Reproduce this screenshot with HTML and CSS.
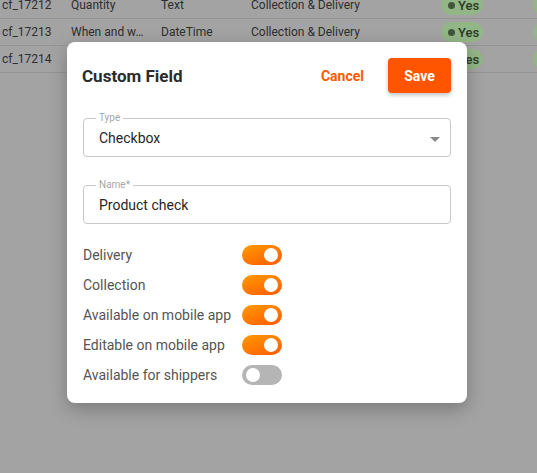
FILE: index.html
```html
<!DOCTYPE html>
<html>
<head>
<meta charset="utf-8">
<link rel="stylesheet" href="styles.css">
</head>
<body>
<div class="page">
  <div class="table">
    <div class="row">
      <span class="c1">cf_17212</span><span class="c2">Quantity</span><span class="c3">Text</span><span class="c4">Collection &amp; Delivery</span>
      <span class="c5"><span class="pill"><i class="dot"></i>Yes</span></span><span class="c6"><span class="pill"><i class="dot"></i>Yes</span></span>
    </div>
    <div class="row">
      <span class="c1">cf_17213</span><span class="c2">When and w…</span><span class="c3">DateTime</span><span class="c4">Collection &amp; Delivery</span>
      <span class="c5"><span class="pill"><i class="dot"></i>Yes</span></span><span class="c6"><span class="pill"><i class="dot"></i>Yes</span></span>
    </div>
    <div class="row">
      <span class="c1">cf_17214</span><span class="c2">Description</span><span class="c3">Text</span><span class="c4">Collection &amp; Delivery</span>
      <span class="c5"><span class="pill"><i class="dot"></i>Yes</span></span><span class="c6"><span class="pill"><i class="dot"></i>Yes</span></span>
    </div>
  </div>

  <div class="modal">
    <div class="header">
      <h2 class="title">Custom Field</h2>
      <div class="actions">
        <button class="btn-text">Cancel</button>
        <button class="btn-primary">Save</button>
      </div>
    </div>

    <fieldset class="field">
      <legend>Type</legend>
      <span class="value">Checkbox</span>
      <svg class="caret" width="10" height="5" viewBox="0 0 10 5"><path d="M0 0 L10 0 L5 5 Z" fill="#8a8a8a"/></svg>
    </fieldset>

    <fieldset class="field field-name">
      <legend>Name*</legend>
      <span class="value">Product check</span>
    </fieldset>

    <div class="toggles">
      <div class="trow"><span class="tlabel">Delivery</span><span class="switch on"><i class="knob"></i></span></div>
      <div class="trow"><span class="tlabel">Collection</span><span class="switch on"><i class="knob"></i></span></div>
      <div class="trow"><span class="tlabel">Available on mobile app</span><span class="switch on"><i class="knob"></i></span></div>
      <div class="trow"><span class="tlabel">Editable on mobile app</span><span class="switch on"><i class="knob"></i></span></div>
      <div class="trow"><span class="tlabel">Available for shippers</span><span class="switch off"><i class="knob"></i></span></div>
    </div>
  </div>
</div>
</body>
</html>
```

FILE: styles.css
```css
* { box-sizing: border-box; }
html, body { margin: 0; padding: 0; }
body {
  font-family: Roboto, "Liberation Sans", sans-serif;
  background: #a3a3a3;
  width: 537px;
  height: 473px;
  overflow: hidden;
}
.page {
  position: relative;
  display: flow-root;
  width: 537px;
  height: 473px;
  overflow: hidden;
  background: #a3a3a3;
}

.table { margin-top: -8px; }
.row {
  display: flex;
  align-items: center;
  height: 27px;
  border-bottom: 1px solid #959595;
  font-size: 12px;
  color: #2e2e2e;
  white-space: nowrap;
  overflow: hidden;
}
.row > span { flex-shrink: 0; overflow: hidden; }
.c1 { width: 71px; padding-left: 2px; }
.c2 { width: 90px; text-overflow: ellipsis; padding-right: 6px; }
.c3 { width: 90px; }
.c4 { width: 190px; }
.c5 { width: 92px; }
.c6 { width: 10px; }
.pill {
  display: inline-flex;
  align-items: center;
  gap: 3px;
  height: 20px;
  width: 42px;
  padding: 0 0 0 7px;
  border-radius: 10px;
  background: #93b686;
  color: #2a3a26;
  font-size: 13px;
  font-weight: 500;
}
.dot { width: 7px; height: 7px; border-radius: 50%; background: #43563c; display: inline-block; }

.modal {
  position: absolute;
  left: 67px;
  top: 42px;
  width: 400px;
  height: 361px;
  background: #fff;
  border-radius: 8px;
  box-shadow: 0 6px 18px rgba(0,0,0,0.25);
  padding: 16px 16px 13px 16px;
}
.header { display: flex; align-items: center; justify-content: space-between; height: 35px; }
.title { margin: 0 0 0 -1px; font-size: 17px; font-weight: 700; color: #2b2b2b; }
.actions { display: flex; align-items: center; gap: 24px; }
.btn-text {
  border: 0; background: none; padding: 0;
  font-family: inherit; font-size: 14px; font-weight: 700; color: #ff5a00;
}
.btn-primary {
  border: 0; background: #ff5500; color: #fff;
  width: 63px; height: 35px; border-radius: 4px;
  font-family: inherit; font-size: 14px; font-weight: 700;
  box-shadow: 0 2px 4px rgba(0,0,0,0.25);
}

.field {
  position: relative;
  margin: 20px 0 0 0;
  padding: 0 15px;
  height: 44px;
  border: 1px solid #c8c8c8;
  border-radius: 4px;
  display: flex;
  align-items: center;
}
.field legend {
  font-size: 10px;
  color: #a6a6a6;
  padding: 0 3px;
  margin-left: -3px;
  line-height: 10px;
}
.field .value { font-size: 14px; color: #262626; margin-top: -4px; }
.caret { position: absolute; right: 10px; top: 14px; }
.field-name { margin-top: 23px; }

.toggles { margin-top: 16px; display: flex; flex-direction: column; }
.trow { display: flex; align-items: center; height: 30px; }
.tlabel { width: 159px; font-size: 14px; color: #555; }
.switch {
  position: relative;
  width: 40px; height: 20px; border-radius: 10px;
  display: inline-block;
}
.switch.on { background: linear-gradient(160deg, #ff9a00 0%, #ff5a00 100%); }
.switch.off { background: #b5b5b5; }
.knob {
  position: absolute; top: 3px;
  width: 14px; height: 14px; border-radius: 50%; background: #fff;
}
.switch.on .knob { right: 4px; }
.switch.off .knob { left: 4px; }
```
